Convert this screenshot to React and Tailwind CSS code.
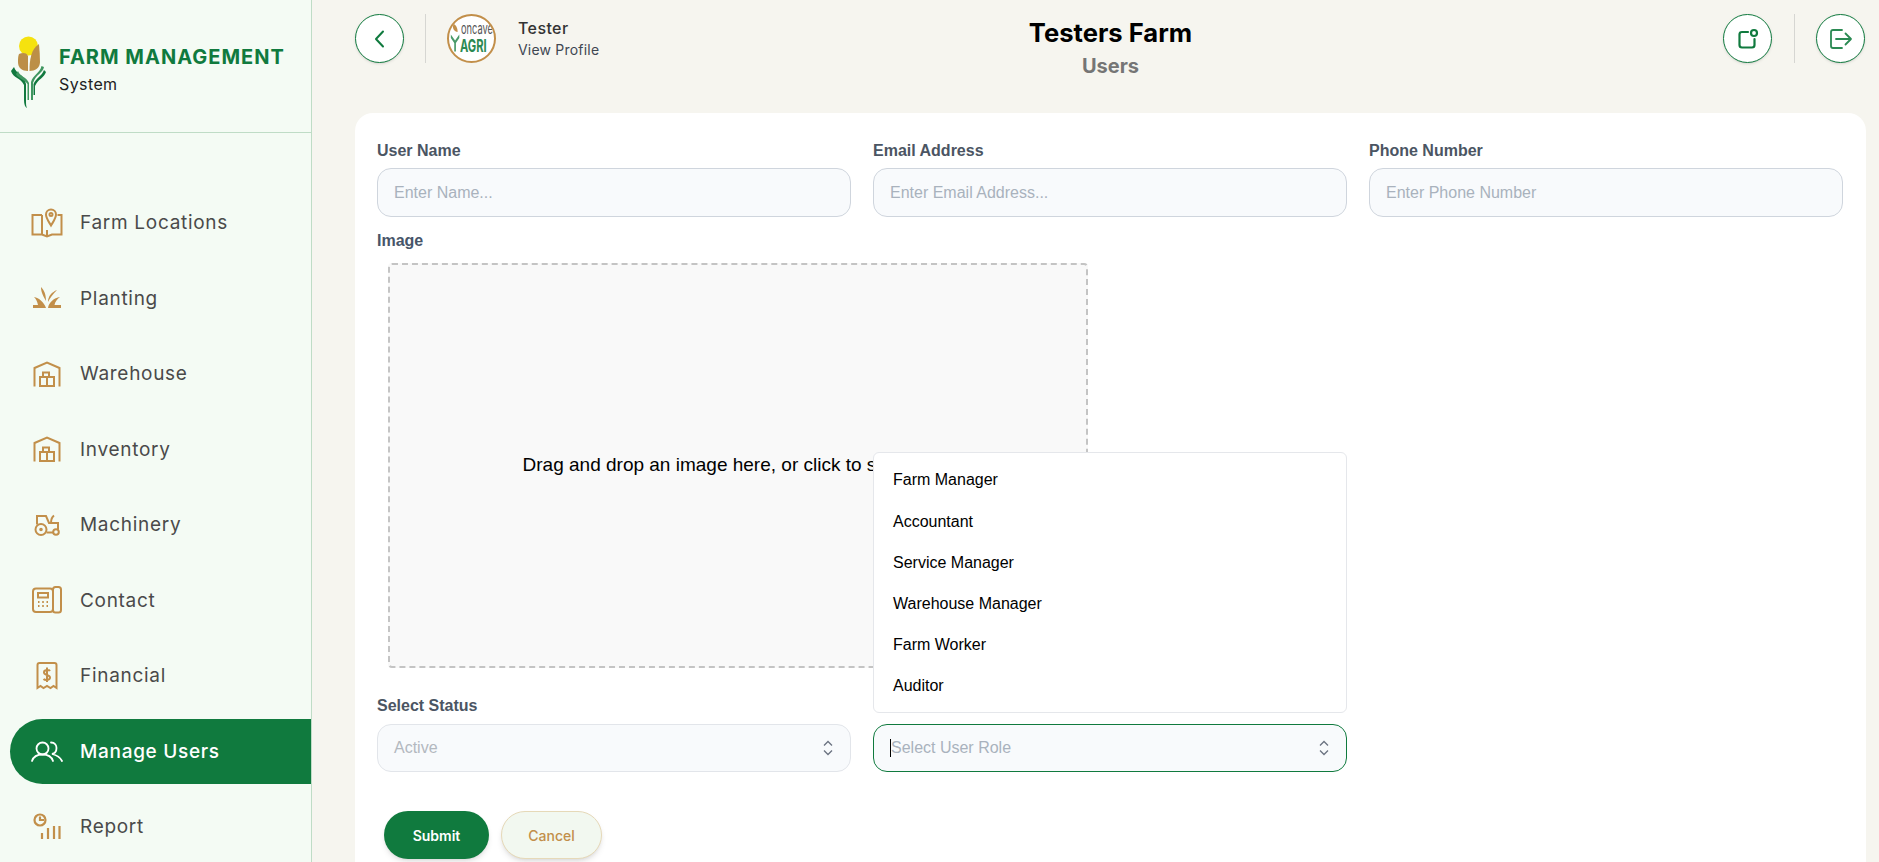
import React from 'react'

const gold = '#c28f4a'

function MapIcon() {
  return (
    <svg width="32" height="30" viewBox="0 0 32 30" fill="none" stroke={gold} strokeWidth="2">
      <path d="M11 7 H1.500 V26.500 H11 L16 28.500 L21 26.500 H30.500 V7 H26.500" />
      <path d="M11 7 V26.500 M16 22 V28.500" />
      <path d="M20 17.500 C17 12.500 15 10 15 6.500 A5 5 0 0 1 25 6.500 C25 10 23 12.500 20 17.500 Z" />
      <circle cx="20" cy="6.500" r="1.500" />
    </svg>
  )
}

function PlantIcon() {
  return (
    <svg width="28" height="22" viewBox="0 0 28 22" fill={gold}>
      <path d="M0 21 V18 H5 C4 14 3 12 1 10 C6 11 11 15 13 21 Z" />
      <path d="M28 21 H15 C16 15 21 11 27 10 C24 12 22 15 21.500 18 H28 Z" />
      <path d="M8 0 C11 3 13 7 13 14 C11 10 8 6 8 0 Z" />
      <path d="M24 3 C19 5 15 9 15 15 C17 11 20 7 24 3 Z" />
    </svg>
  )
}

function BarnIcon() {
  return (
    <svg width="28" height="26" viewBox="0 0 28 26" fill="none" stroke={gold} strokeWidth="2">
      <path d="M1.500 25.500 V7 L14 1.500 L26.500 7 V25.500" />
      <path d="M7 25 V16 H21 V25 Z M14 25 V16" />
      <path d="M10 16 V11.500 H16 V16" />
    </svg>
  )
}

function TractorIcon() {
  return (
    <svg width="26" height="22" viewBox="0 0 26 22" fill="none" stroke={gold} strokeWidth="2">
      <circle cx="7" cy="15.500" r="5.500" />
      <circle cx="7" cy="15.500" r="0.800" fill={gold} />
      <circle cx="22" cy="18" r="2.800" />
      <path d="M3 10.500 V2 H12 L15 9 H24 V15.500 M12.500 18.500 H19.500 M17 9 C17 6 18 3 20 1.500" />
    </svg>
  )
}

function PhoneIcon() {
  return (
    <svg width="30" height="28" viewBox="0 0 30 28" fill="none" stroke={gold} strokeWidth="2">
      <rect x="1" y="2.500" width="20" height="23.500" rx="3" />
      <rect x="21" y="1" width="8" height="25.500" rx="2.500" />
      <rect x="6" y="7" width="10" height="4.500" />
      <path d="M6 16 H7.500 M10.200 16 H11.800 M14.500 16 H16 M6 20 H7.500 M10.200 20 H11.800 M14.500 20 H16" />
    </svg>
  )
}

function ReceiptIcon() {
  return (
    <svg width="22" height="28" viewBox="0 0 22 28" fill="none" stroke={gold} strokeWidth="2">
      <path d="M1.500 26 V3 Q1.500 1 3.500 1 H18.500 Q20.500 1 20.500 3 V26 L17.500 24 L14.500 26 L11 24 L7.500 26 L4.500 24 Z" />
      <path d="M14 9 C13 7.500 8 7.500 8 10.500 C8 13.500 14 12.500 14 15.500 C14 18.500 9 18.500 7.500 17 M11 5.500 V20" />
    </svg>
  )
}

function UsersIcon() {
  return (
    <svg width="32" height="21" viewBox="0 0 32 21" fill="none" stroke="#fff" strokeWidth="1.800" strokeLinecap="round">
      <circle cx="11.500" cy="7.500" r="6" />
      <path d="M1 20 C2.500 15.500 6 13.500 11.500 13.500 C17 13.500 20.500 15.500 22 20" />
      <path d="M20 1.500 C24 1.500 25.500 4.500 25.500 7 C25.500 10 23.500 12.500 21 13 C25 14 29 16 31 20" />
    </svg>
  )
}

function ReportIcon() {
  return (
    <svg width="28" height="27" viewBox="0 0 28 27" fill="none" stroke={gold} strokeWidth="2.200">
      <circle cx="7" cy="7" r="5.500" />
      <path d="M7 3.500 V7 H11" />
      <path d="M9 26 V20 M15 26 V15 M21 26 V13 M26.500 26 V13" />
    </svg>
  )
}

// viewBox uses page pixels so the shapes can be read straight off the screenshot
function Logo() {
  return (
    <svg width="40" height="75" viewBox="9 35 40 75" className="shrink-0">
      <circle cx="28.500" cy="46" r="9.500" fill="#f5e20f" />
      <path d="M19 54 C22 53 26 52 28 56 V71 C22 71 18 68 18 62 C18 59 18 56 19 54 Z" fill="#bc8f47" />
      <path d="M39 44 C39.500 50 40 56 40 62 C40 68 35 71 29.500 71 C29.500 60 31 49 39 44 Z" fill="#bc8f47" />
      <path d="M14 67 C16 74 24 74 26 84 V101 C26 104 26 106 27 108 C25 107 24 104 24 100 V85 C21 78 13 78 11 71 Z" fill="#11793f" />
      <path d="M18 71 C20 77 26 76 29 83 V100 H27.500 V84 C24 79 17 78 16 74 Z" fill="#3f9660" />
      <path d="M44 67 C43 73 36 74 33 83 V100 H31 V82 C33 75 40 73 41.500 66 Z" fill="#3f9660" />
      <path d="M46 72 C44 78 38 79 35 86 V95 H33.500 V84 C36 78 42 76 44 70 Z" fill="#11793f" />
    </svg>
  )
}

function Avatar() {
  return (
    <div className="relative w-[49px] h-[49px] rounded-full border-[2px] border-[#c28f4a] bg-white overflow-hidden shrink-0">
      <svg width="11" height="32" viewBox="0 0 13 34" className="absolute left-[1px] top-[6px]">
        <path d="M3 0 C7 1 9 5 9 10 C5 10 3 6 3 0 Z" fill="#c28f4a" />
        <path d="M1 13 L6 20 L11 13 L11 17 L7 23 V33 H5 V23 L1 17 Z" fill="#4a9a6a" />
      </svg>
      <div className="absolute left-[12px] top-[6px] text-[#555] text-[15px] leading-[13px] origin-left scale-x-[0.62] whitespace-nowrap">oncave</div>
      <div className="absolute left-[11px] top-[21px] text-[#2b8a53] text-[18px] leading-[18px] font-bold origin-left scale-x-[0.62]">AGRI</div>
    </div>
  )
}

function CircleButton({ children }) {
  return (
    <button className="w-[49px] h-[49px] rounded-full bg-white border border-[#107a3e] flex items-center justify-center shrink-0 shadow-sm">
      {children}
    </button>
  )
}

function Chevrons() {
  return (
    <svg width="12" height="18" viewBox="0 0 12 18" fill="none" stroke="#6b7280" strokeWidth="1.300" className="shrink-0">
      <path d="M2 6.500 L6 2.500 L10 6.500 M2 11.500 L6 15.500 L10 11.500" />
    </svg>
  )
}

const navItems = [
  ['Farm Locations', MapIcon],
  ['Planting', PlantIcon],
  ['Warehouse', BarnIcon],
  ['Inventory', BarnIcon],
  ['Machinery', TractorIcon],
  ['Contact', PhoneIcon],
  ['Financial', ReceiptIcon],
  ['Manage Users', UsersIcon, true],
  ['Report', ReportIcon],
]

const roles = ['Farm Manager', 'Accountant', 'Service Manager', 'Warehouse Manager', 'Farm Worker', 'Auditor']

const arial = "font-['Liberation_Sans',Arial,sans-serif]"
const labelClass = `block text-[16px] leading-[20px] font-bold text-[#4b5563] ${arial}`
const inputClass = `w-full h-[49px] mt-[7px] px-[16px] rounded-[14px] bg-[#f8fafc] border border-[#cfd5dd] text-[16px] outline-none placeholder:text-[#a9b2bd] ${arial}`

function Field({ label, placeholder }) {
  return (
    <div>
      <label className={labelClass}>{label}</label>
      <input className={inputClass} placeholder={placeholder} />
    </div>
  )
}

export default function App() {
  return (
    <div className="flex h-[862px] overflow-hidden bg-[#f6f5ef] font-['Inter',sans-serif]">
      <aside className="w-[312px] shrink-0 h-full bg-[#f4fbf4] border-r border-[#bfdcc6]">
        <div className="h-[133px] border-b border-[#bfdcc6] flex items-center gap-[10px] pl-[9px] pt-[13px]">
          <Logo />
          <div className="mt-[-5px]">
            <div className="text-[#107a3e] text-[20px] leading-[26px] font-bold tracking-[1px] whitespace-nowrap">FARM MANAGEMENT</div>
            <div className="text-[#222] text-[16px] leading-[24px] tracking-[0.4px] mt-[2px]">System</div>
          </div>
        </div>
        <nav className="flex flex-col gap-[10.5px] pt-[57px] pl-[10px]">
          {navItems.map(([name, Icon, active]) => (
            <div
              key={name}
              className={`h-[65px] shrink-0 flex items-center rounded-l-[33px] ${active ? 'bg-[#107a3e] text-white font-medium' : 'text-[#4a4a4a]'}`}
            >
              <div className="w-[70px] flex justify-center shrink-0 pl-[4px]"><Icon /></div>
              <span className="text-[19px] tracking-[0.7px] whitespace-nowrap pt-[2px]">{name}</span>
            </div>
          ))}
        </nav>
      </aside>

      <main className="flex-1 min-w-0 pl-[43px] pr-[13px]">
        <header className="h-[113px] pt-[14px] grid grid-cols-[1fr_auto_1fr] items-start">
          <div className="flex items-center">
            <CircleButton>
              <svg width="20" height="20" viewBox="0 0 20 20" fill="none" stroke="#107a3e" strokeWidth="2" strokeLinecap="round" strokeLinejoin="round">
                <path d="M13 2.500 L6 10 L13 17.500" />
              </svg>
            </CircleButton>
            <div className="w-px h-[49px] bg-[#d6d6d2] mx-[21px]" />
            <Avatar />
            <div className="ml-[22px]">
              <div className="text-[16px] leading-[22px] font-medium text-[#333] tracking-[0.4px]">Tester</div>
              <div className="text-[14px] leading-[20px] mt-[1px] text-[#3f4752] tracking-[0.2px]">View Profile</div>
            </div>
          </div>
          <div className="text-center pt-[1px]">
            <div className="text-[25.6px] leading-[36px] font-bold text-black">Testers Farm</div>
            <div className="text-[20px] leading-[28px] font-bold text-[#757575] mt-[1px]">Users</div>
          </div>
          <div className="flex items-center justify-end pr-[1px]">
            <CircleButton>
              <svg width="22" height="22" viewBox="0 0 22 22" fill="none" stroke="#107a3e" strokeWidth="2.200" strokeLinecap="round">
                <path d="M11 4 H5 Q2.500 4 2.500 6.500 V17 Q2.500 19.500 5 19.500 H15 Q17.500 19.500 17.500 17 V11" />
                <circle cx="17" cy="5" r="3" />
              </svg>
            </CircleButton>
            <div className="w-px h-[49px] bg-[#d6d6d2] ml-[22px] mr-[21px]" />
            <CircleButton>
              <svg width="24" height="22" viewBox="0 0 24 22" fill="none" stroke="#2b8a53" strokeWidth="1.800" strokeLinecap="round" strokeLinejoin="round">
                <path d="M13 2 H4 Q2 2 2 4 V18 Q2 20 4 20 H13" />
                <path d="M7 11 H22 M16.500 5.500 L22 11 L16.500 16.500" />
              </svg>
            </CircleButton>
          </div>
        </header>

        <section className="bg-white rounded-t-[18px] h-[749px] px-[22px] pt-[28px]">
          <div className="grid grid-cols-[repeat(3,474px)] gap-x-[22px]">
            <Field label="User Name" placeholder="Enter Name..." />
            <Field label="Email Address" placeholder="Enter Email Address..." />
            <Field label="Phone Number" placeholder="Enter Phone Number" />
          </div>

          <div className="mt-[14px]">
            <label className={`${labelClass} !text-[#475569]`}>Image</label>
            <div className={`ml-[11px] mt-[12px] w-[700px] h-[405px] flex items-center justify-center bg-[#f9f9f9] border-2 border-dashed border-[#c4c4c4] rounded-[4px] text-[19px] text-black ${arial}`}>
              Drag and drop an image here, or click to select one
            </div>
          </div>

          <div className="grid grid-cols-[repeat(3,474px)] gap-x-[22px] mt-[28px]">
            <div>
              <label className={labelClass}>Select Status</label>
              <div className={`h-[48px] mt-[8px] px-[16px] rounded-[14px] bg-[#f8fafc] border border-[#e2e5ea] flex items-center justify-between text-[16px] text-[#b3b8bf] ${arial}`}>
                <span>Active</span>
                <Chevrons />
              </div>
            </div>
            <div className="relative pt-[28px]">
              <div className={`absolute left-0 right-0 bottom-[59px] bg-white border border-[#e5e7eb] rounded-[6px] pt-[7px] pb-[5px] text-[16px] text-black ${arial}`}>
                {roles.map((role) => (
                  <div key={role} className="h-[41.2px] flex items-center px-[19px]">{role}</div>
                ))}
              </div>
              <div className={`h-[48px] px-[16px] rounded-[14px] bg-[#f8fafc] border border-[#107a3e] flex items-center justify-between text-[16px] text-[#a9b2bd] ${arial}`}>
                <span className="border-l border-black leading-[18px]">Select User Role</span>
                <Chevrons />
              </div>
            </div>
          </div>

          <div className="flex gap-[12px] mt-[39px] ml-[7px]">
            <button className="w-[105px] h-[48px] rounded-[24px] bg-[#107a3e] text-white text-[14px] font-semibold shadow-md">Submit</button>
            <button className="w-[101px] h-[48px] rounded-[24px] bg-[#f2f8f0] border border-[#e6d9b8] text-[#c28f4a] text-[14px] font-medium shadow-md">Cancel</button>
          </div>
        </section>
      </main>
    </div>
  )
}
